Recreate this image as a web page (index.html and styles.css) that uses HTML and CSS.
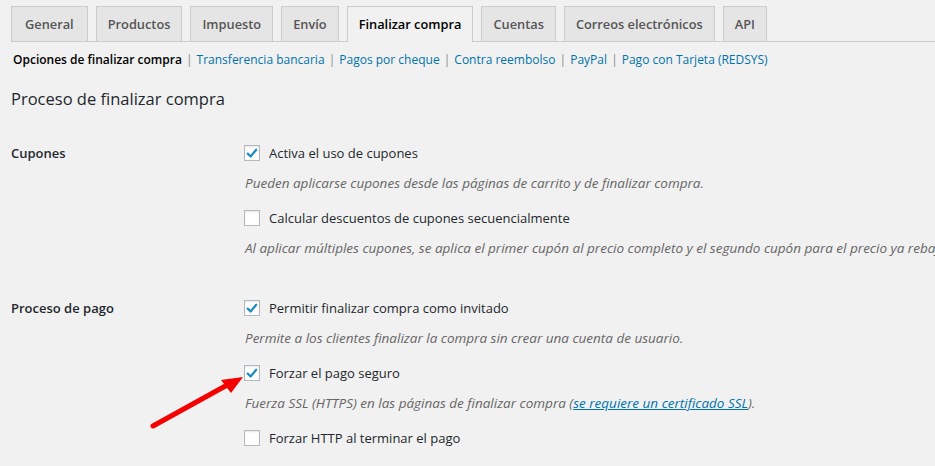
FILE: index.html
```html
<!DOCTYPE html>
<html lang="es">
<head>
    <meta charset="UTF-8">
    <title>Ajustes de WooCommerce</title>
    <link rel="stylesheet" href="styles.css">
</head>
<body>
    <div class="wrap">
        <nav class="nav-tabs">
            <a class="nav-tab" href="#">General</a>
            <a class="nav-tab" href="#">Productos</a>
            <a class="nav-tab" href="#">Impuesto</a>
            <a class="nav-tab" href="#">Envío</a>
            <a class="nav-tab active" href="#">Finalizar compra</a>
            <a class="nav-tab" href="#">Cuentas</a>
            <a class="nav-tab" href="#">Correos electrónicos</a>
            <a class="nav-tab" href="#">API</a>
        </nav>

        <ul class="subsubsub">
            <li><a class="current" href="#">Opciones de finalizar compra</a> |</li>
            <li><a href="#">Transferencia bancaria</a> |</li>
            <li><a href="#">Pagos por cheque</a> |</li>
            <li><a href="#">Contra reembolso</a> |</li>
            <li><a href="#">PayPal</a> |</li>
            <li><a href="#">Pago con Tarjeta (REDSYS)</a></li>
        </ul>

        <h2 class="section-title">Proceso de finalizar compra</h2>

        <div class="form-table">
            <div class="form-row">
                <div class="row-label">Cupones</div>
                <div class="row-field">
                    <label class="option"><span class="checkbox checked"><svg viewBox="0 0 16 16"><path d="M3.2 8.2 L6.4 11.4 L12.8 3.8"/></svg></span>Activa el uso de cupones</label>
                    <p class="description">Pueden aplicarse cupones desde las páginas de carrito y de finalizar compra.</p>
                    <label class="option"><span class="checkbox"></span>Calcular descuentos de cupones secuencialmente</label>
                    <p class="description">Al aplicar múltiples cupones, se aplica el primer cupón al precio completo y el segundo cupón para el precio ya rebajado.</p>
                </div>
            </div>

            <div class="form-row">
                <div class="row-label">Proceso de pago</div>
                <div class="row-field">
                    <label class="option"><span class="checkbox checked"><svg viewBox="0 0 16 16"><path d="M3.2 8.2 L6.4 11.4 L12.8 3.8"/></svg></span>Permitir finalizar compra como invitado</label>
                    <p class="description">Permite a los clientes finalizar la compra sin crear una cuenta de usuario.</p>
                    <label class="option"><span class="checkbox checked"><svg viewBox="0 0 16 16"><path d="M3.2 8.2 L6.4 11.4 L12.8 3.8"/></svg></span>Forzar el pago seguro</label>
                    <p class="description">Fuerza SSL (HTTPS) en las páginas de finalizar compra (<a href="#">se requiere un certificado SSL</a>).</p>
                    <label class="option"><span class="checkbox"></span>Forzar HTTP al terminar el pago</label>
                </div>
            </div>
        </div>
    </div>

    <!-- annotation arrow -->
    <svg class="arrow" viewBox="0 0 105 70">
        <line x1="8" y1="61" x2="84" y2="19" />
        <polygon points="98,12 76,15 86,28" />
    </svg>
</body>
</html>
```

FILE: styles.css
```css
:root {
    --bg: #f1f1f1;
    --text: #23282d;
    --muted: #666;
    --link: #0073aa;
    --border: #ccc;
    --tab-bg: #e5e5e5;
    --check: #1e8cbe;
}

* {
    margin: 0;
    padding: 0;
    box-sizing: border-box;
}

html, body {
    overflow: hidden;
}

body {
    font-family: 'Open Sans', 'Noto Sans', sans-serif;
    font-size: 13px;
    background: var(--bg);
    color: var(--text);
    position: relative;
    min-height: 466px;
}

a {
    color: var(--link);
    text-decoration: none;
}

.wrap {
    padding-left: 11px;
}

/* tabs */
.nav-tabs {
    display: flex;
    gap: 8px;
    padding-top: 6px;
    border-bottom: 1px solid var(--border);
    white-space: nowrap;
}

.nav-tab {
    display: block;
    padding: 5px 11px 5px;
    line-height: 24px;
    font-size: 12.8px;
    font-weight: 600;
    color: #555;
    background: var(--tab-bg);
    border: 1px solid var(--border);
    border-bottom: none;
}

.nav-tab:first-child {
    padding: 5px 13px;
}

.nav-tab.active {
    background: var(--bg);
    color: #000;
    margin-bottom: -1px;
    padding-bottom: 6px;
}

/* sub links */
.subsubsub {
    list-style: none;
    display: flex;
    margin-top: 8px;
    padding-left: 2px;
    line-height: 20px;
    font-size: 12px;
    color: #888;
    white-space: nowrap;
}

.subsubsub li {
    margin-right: 4px;
}

.subsubsub a {
    margin-right: 1px;
}

.subsubsub a.current {
    color: #000;
    font-weight: 600;
}

.section-title {
    margin-top: 17px;
    font-size: 16.5px;
    font-weight: 400;
    line-height: 24px;
}

/* settings rows */
.form-table {
    margin-top: 32px;
}

.form-row {
    display: grid;
    grid-template-columns: 233px 1fr;
    margin-bottom: 40px;
}

.row-label {
    font-weight: 600;
    line-height: 20px;
}

.row-field {
    white-space: nowrap;
}

.option {
    display: flex;
    align-items: center;
    line-height: 20px;
    margin-top: 15px;
}

.option:first-child {
    margin-top: 0;
}

.checkbox {
    width: 16px;
    height: 16px;
    margin-right: 9px;
    background: #fff;
    border: 1px solid #b4b9be;
    box-shadow: inset 0 1px 2px rgba(0, 0, 0, 0.1);
    display: flex;
    align-items: center;
    justify-content: center;
}

.checkbox svg {
    width: 15px;
    height: 15px;
    fill: none;
    stroke: var(--check);
    stroke-width: 2.6;
    stroke-linecap: round;
    stroke-linejoin: round;
}

.description {
    margin-top: 10px;
    line-height: 20px;
    font-size: 13.5px;
    font-style: italic;
    color: var(--muted);
    padding-left: 1px;
}

.description a {
    text-decoration: underline;
}

.arrow {
    position: absolute;
    left: 145px;
    top: 365px;
    width: 105px;
    height: 70px;
}

.arrow line {
    stroke: #f40000;
    stroke-width: 5;
    stroke-linecap: round;
}

.arrow polygon {
    fill: #f40000;
}
```
